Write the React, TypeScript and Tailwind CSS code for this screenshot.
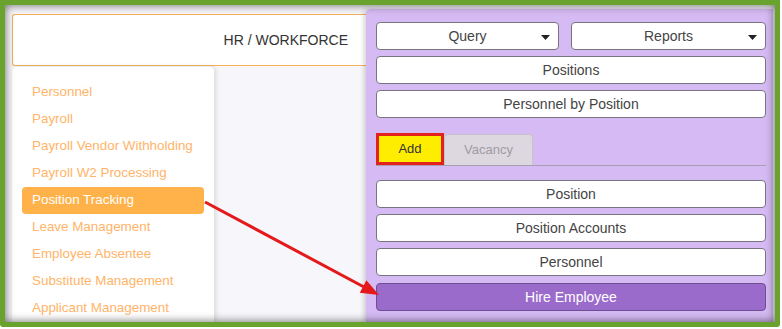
import { ReactNode } from "react";

const menu = [
  "Personnel",
  "Payroll",
  "Payroll Vendor Withholding",
  "Payroll W2 Processing",
  "Position Tracking",
  "Leave Management",
  "Employee Absentee",
  "Substitute Management",
  "Applicant Management",
];

const Caret = () => (
  <svg width="9" height="5" viewBox="0 0 9 5" className="absolute right-[8px] top-[12px]">
    <path d="M0 0 H9 L4.5 5 Z" fill="#222" />
  </svg>
);

const PanelButton = ({ children, className = "" }: { children: ReactNode; className?: string }) => (
  <button className={`relative h-[28px] rounded-[4px] border-[1.5px] border-[#7a7480] bg-white text-[14px] text-[#444] ${className}`}>
    {children}
  </button>
);

export default function App() {
  return (
    <div className="relative h-[329px] w-[782px] bg-white font-['Liberation_Sans',Arial,sans-serif]">
      <div className="relative h-[327px] w-[780px] overflow-hidden rounded-b-[3px] border-[5px] border-[#69a22d] bg-[#f7f6fa]">
        <div className="flex h-full">
          {/* left side: header + sidebar */}
          <div className="flex w-[361px] flex-col pl-[7px] pt-[9px]">
            <div className="flex h-[53px] items-center justify-end rounded-l-[3px] border border-r-0 border-[#f2b35a] bg-white pr-[18px] text-[14px] text-[#333]">
              HR / WORKFORCE
            </div>
            <div className="mt-[1px] w-[202px] flex-1 rounded-t-[4px] bg-white px-[10px] pt-[12px] shadow-[2px_0_5px_rgba(0,0,0,0.12)]">
              {menu.map((item) => (
                <div
                  key={item}
                  className={`flex h-[27px] items-center rounded-[4px] px-[10px] text-[13.4px] ${
                    item === "Position Tracking" ? "bg-[#ffb24a] text-white" : "text-[#ffb468]"
                  }`}
                >
                  {item}
                </div>
              ))}
            </div>
          </div>

          {/* purple panel */}
          <div className="mr-[2px] mt-[4px] flex flex-1 flex-col rounded-tl-[5px] bg-[#d5baf3] pl-[10px] pr-[7px] pt-[13px] shadow-[-2px_0_5px_rgba(0,0,0,0.18)]">
            <div className="flex gap-[12px]">
              <PanelButton className="w-[183px]">
                Query
                <Caret />
              </PanelButton>
              <PanelButton className="w-[195px]">
                Reports
                <Caret />
              </PanelButton>
            </div>
            <PanelButton className="mt-[6px]">Positions</PanelButton>
            <PanelButton className="mt-[6px]">Personnel by Position</PanelButton>

            <div className="mt-[15px] flex items-end border-b border-[#a99fb3]">
              <div className="flex h-[32px] w-[68px] items-center justify-center border-[3px] border-[#e3211c] bg-[#ffed00] text-[13px] text-[#333]">
                Add
              </div>
              <div className="flex h-[31px] w-[89px] items-center justify-center rounded-t-[4px] border border-b-0 border-[#c9c2cd] bg-[#ddd8df] text-[13px] text-[#a09ba3]">
                Vacancy
              </div>
            </div>

            <PanelButton className="mt-[14px]">Position</PanelButton>
            <PanelButton className="mt-[6px]">Position Accounts</PanelButton>
            <PanelButton className="mt-[6px]">Personnel</PanelButton>
            <button className="mt-[7px] h-[28px] rounded-[4px] border-[1.5px] border-[#6e4f93] bg-[#9b6bcc] text-[14px] text-white">
              Hire Employee
            </button>
          </div>
        </div>

        {/* inset shadow of the frame */}
        <div className="pointer-events-none absolute inset-0 shadow-[inset_0_0_10px_rgba(0,0,0,0.6)]" />
      </div>

      {/* red arrow */}
      <svg className="pointer-events-none absolute left-0 top-0" width="782" height="329">
        <line x1="205" y1="202" x2="364" y2="287" stroke="#e3191b" strokeWidth="3" />
        <polygon points="379,295 359.8,292.7 366.4,280.3" fill="#e3191b" />
      </svg>
    </div>
  );
}
